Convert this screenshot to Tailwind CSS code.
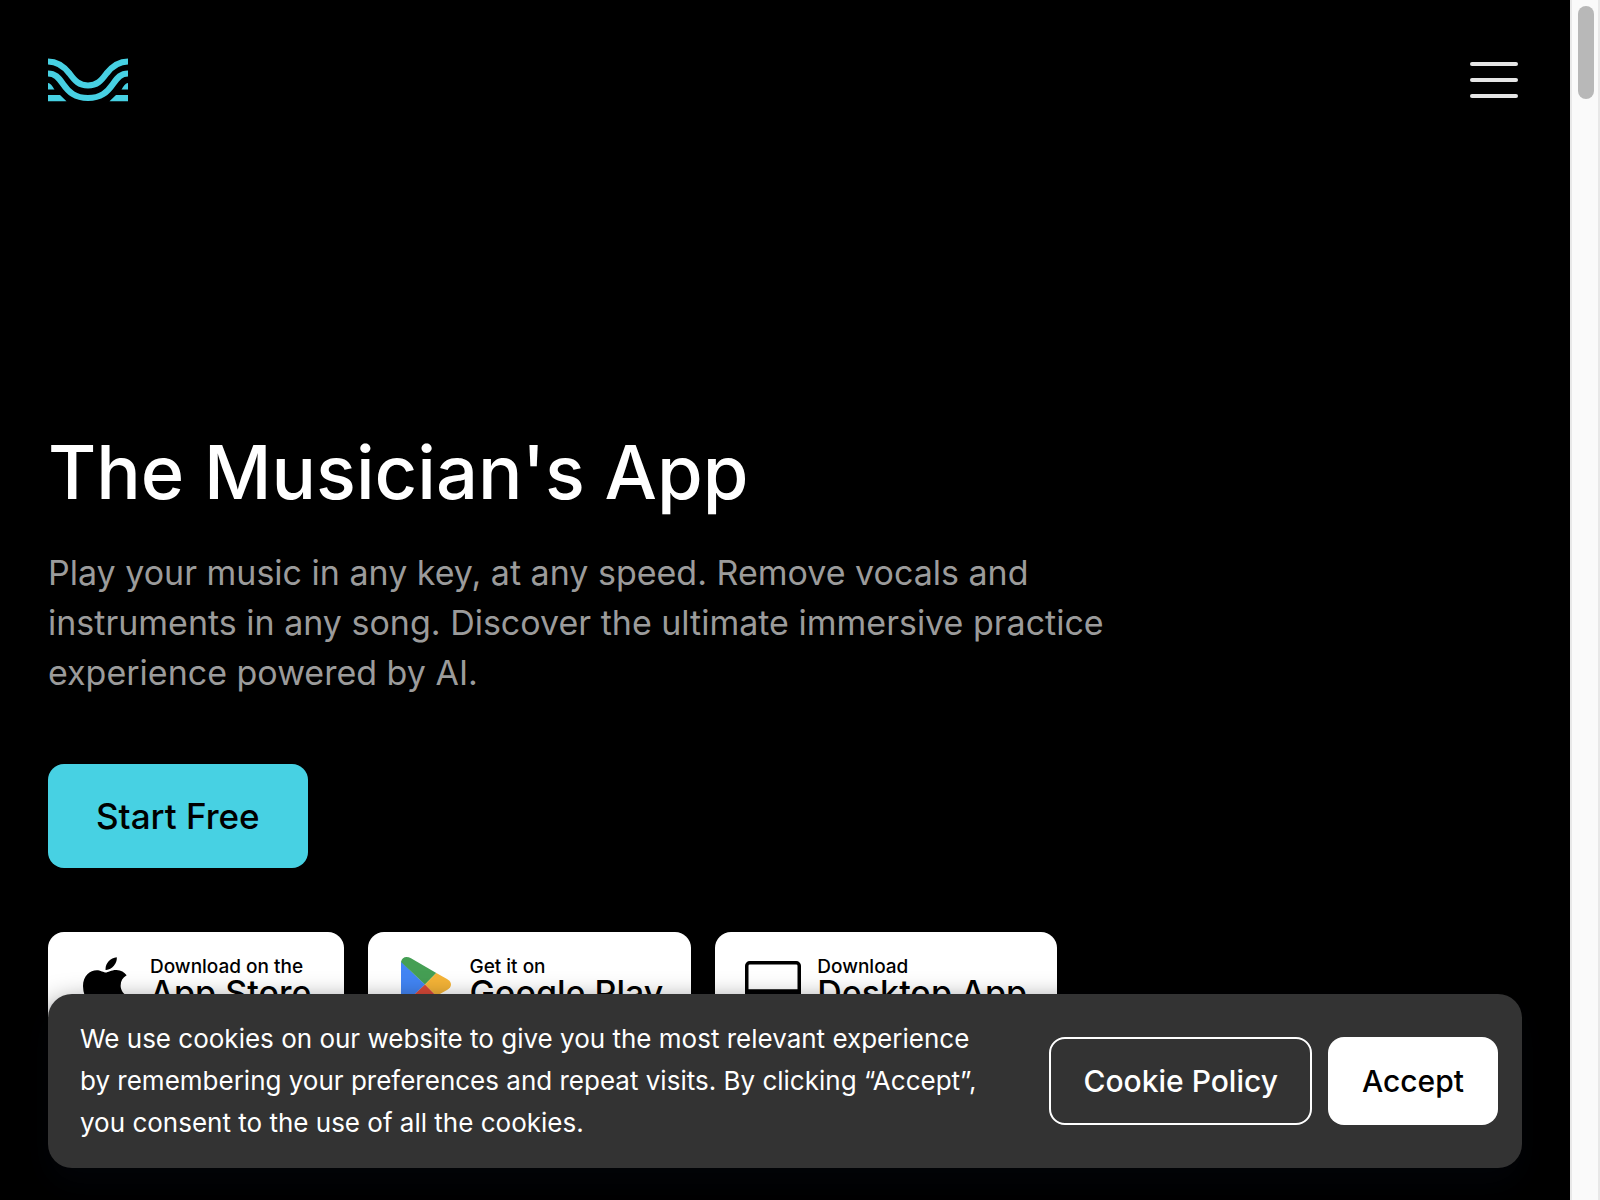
<!DOCTYPE html>
<html lang="en">
<head>
<meta charset="utf-8">
<meta name="viewport" content="width=device-width, initial-scale=1">
<title>The Musician's App</title>
<script src="https://cdn.jsdelivr.net/npm/@tailwindcss/browser@4"></script>
</head>
<body class="flex h-screen overflow-hidden bg-black font-['Inter',sans-serif] text-white">
  <div class="relative h-screen min-w-0 flex-1 overflow-hidden">
    <header class="flex h-40 items-center justify-between pl-12 pr-[52px]">
      <a href="#" aria-label="Home">
        <svg class="block h-11 w-20" viewBox="0 0 80 44" fill="none" aria-hidden="true">
          <g stroke="#47d1e3" stroke-width="6.2">
            <path d="M0 3.500C10 3.500 16 8.500 21.500 15.500C27 23 31 27.500 40 27.500C49 27.500 53 23 58.500 15.500C64 8.500 70 3.500 80 3.500"/>
            <path d="M0 15.500C7 15.500 10.500 19.500 15 26C20.500 34 27 40 40 40C53 40 59.500 34 65 26C69.500 19.500 73 15.500 80 15.500"/>
          </g>
          <g fill="#47d1e3">
            <path d="M0 25C3 25.500 4.500 28.500 6.500 31.500H0ZM80 25C77 25.500 75.500 28.500 73.500 31.500H80Z"/>
            <path d="M0 37H12L18.500 43.200H0ZM80 37H68L61.500 43.200H80Z"/>
          </g>
        </svg>
      </a>
      <button type="button" aria-label="Menu" class="flex w-12 flex-col gap-3">
        <span class="h-1 w-full rounded-full bg-[#e5e5e5]"></span>
        <span class="h-1 w-full rounded-full bg-[#e5e5e5]"></span>
        <span class="h-1 w-full rounded-full bg-[#e5e5e5]"></span>
      </button>
    </header>

    <main class="px-12 pt-[264px]">
      <h1 class="text-[74px] leading-[96px] font-medium">The Musician's App</h1>
      <p class="mt-7 max-w-[1100px] text-[34px] leading-[50px] text-[#9b9b9b]">Play your music in any key, at any speed. Remove vocals and instruments in any song. Discover the ultimate immersive practice experience powered by AI.</p>
      <a href="#" class="mt-[66px] inline-flex h-26 items-center rounded-2xl bg-[#47d1e3] px-12 text-[35px] font-medium text-black">Start Free</a>

      <div class="mt-16 flex gap-6 text-black">
        <a href="#" class="flex h-26 items-center gap-[22px] rounded-2xl bg-white pl-[35px] pr-[33px]">
          <svg class="h-[54px] w-[45px]" viewBox="4 32 376 448" aria-hidden="true"><path d="M318.700 268.700c-.2-36.700 16.400-64.400 50-84.800-18.800-26.900-47.200-41.700-84.700-44.600-35.500-2.800-74.300 20.700-88.500 20.700-15 0-49.400-19.700-76.400-19.700C63.300 141.200 4 184.800 4 273.500q0 39.300 14.400 81.200c12.800 36.700 59 126.700 107.200 125.200 25.200-.6 43-17.900 75.800-17.900 31.800 0 48.300 17.900 76.400 17.900 48.600-.7 90.400-82.500 102.600-119.300-65.200-30.700-61.700-90-61.700-91.900zm-56.600-164.200c27.300-32.400 24.800-61.900 24-72.500-24.100 1.400-52 16.400-67.900 34.900-17.500 19.800-27.800 44.300-25.600 71.900 26.100 2 49.900-11.400 69.500-34.300z"/></svg>
          <span class="flex flex-col pb-0.5 font-medium"><span class="text-[19px] leading-5">Download on the</span><span class="text-[34px] leading-8">App Store</span></span>
        </a>
        <a href="#" class="flex h-26 items-center gap-[18px] rounded-2xl bg-white pl-[33px] pr-7">
          <svg class="h-[55px] w-[50px]" viewBox="0 0 50 55" aria-hidden="true">
            <path fill="#4285f4" d="M0 4.500L24 27.500L0 50.500Z"/>
            <path fill="#459f54" d="M0 5C1-.5 6-1 10 1.300L35.300 16L24 27.500Z"/>
            <path fill="#f5b437" d="M35.300 16L46 22C51.300 25 51.300 30 46 33L35.300 39L24 27.500Z"/>
            <path fill="#db4a39" d="M0 50C1 55.500 6 56 10 53.700L35.300 39L24 27.500Z"/>
          </svg>
          <span class="flex flex-col pb-0.5 font-medium"><span class="text-[19px] leading-5">Get it on</span><span class="text-[34px] leading-8">Google Play</span></span>
        </a>
        <a href="#" class="flex h-26 items-center gap-4 rounded-2xl bg-white px-[30px]">
          <svg class="h-[46px] w-14" viewBox="0 0 56 46" fill="none" stroke="#000" stroke-width="3.500" aria-hidden="true"><rect x="1.750" y="1.750" width="52.500" height="34" rx="3"/><path fill="#000" d="M2 30H54V35H2ZM16 44H40M28 36V44"/></svg>
          <span class="flex flex-col pb-0.5 font-medium"><span class="text-[19px] leading-5">Download</span><span class="text-[34px] leading-8">Desktop App</span></span>
        </a>
      </div>
    </main>

    <section aria-label="Cookie consent" class="absolute inset-x-12 bottom-8 flex items-center justify-between gap-8 rounded-3xl bg-[#333] py-6 pl-8 pr-6 shadow-[0_16px_32px_#020408]">
      <p class="max-w-[912px] text-[26px] leading-[42px]">We use cookies on our website to give you the most relevant experience by remembering your preferences and repeat visits. By clicking “Accept”, you consent to the use of all the cookies.</p>
      <div class="flex shrink-0 gap-4 text-[30px] font-medium">
        <a href="#" class="flex h-22 items-center rounded-2xl border-2 border-white px-8">Cookie Policy</a>
        <button type="button" class="h-22 rounded-2xl bg-white px-[34px] text-black">Accept</button>
      </div>
    </section>
  </div>

  <div class="h-screen w-[30px] shrink-0 border-l-2 border-r-2 border-[#e8e8e8] bg-[#fafafa] px-1.5 pt-1.5" aria-hidden="true">
    <div class="h-[93px] w-4 rounded-full bg-[#b8b8b8]"></div>
  </div>
</body>
</html>
